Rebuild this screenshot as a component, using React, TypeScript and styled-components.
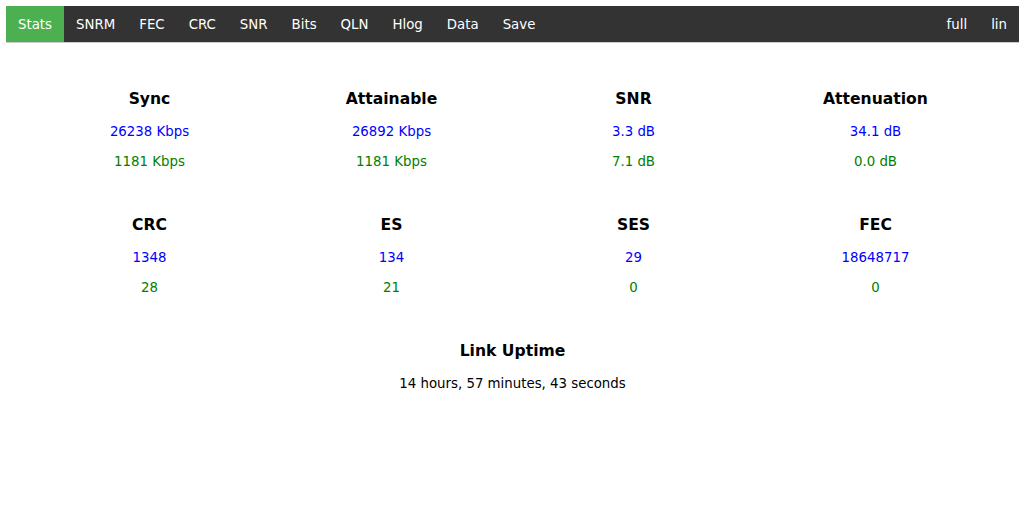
import React from "react";
import styled, { createGlobalStyle } from "styled-components";

const GlobalStyle = createGlobalStyle`
  body {
    margin: 6px;
    font-family: "DejaVu Sans", Verdana, sans-serif;
    font-size: 13.33px;
    color: #000;
    background: #fff;
  }
`;

const NavBar = styled.div`
  display: flex;
  height: 36px;
  background-color: #333;
  border-bottom: 1px solid #ccc;
`;

const NavSpacer = styled.div`
  flex: 1;
`;

const NavItem = styled.a<{ $active?: boolean }>`
  display: flex;
  align-items: center;
  padding: 0 12px;
  color: #fff;
  text-decoration: none;
  cursor: pointer;
  background-color: ${(p) => (p.$active ? "#4caf50" : "transparent")};
`;

const Content = styled.div`
  width: 968px;
  margin: 46px auto 0;
  display: flex;
  flex-direction: column;
  gap: 38px;
`;

const Row = styled.div`
  display: grid;
  grid-template-columns: repeat(4, 1fr);
`;

const Cell = styled.div`
  display: flex;
  flex-direction: column;
  align-items: center;
`;

const Title = styled.div`
  font-weight: bold;
  font-size: 15.6px;
  line-height: 20px;
  margin-bottom: 8px;
`;

const Value = styled.div<{ $tone?: "down" | "up" | "plain" }>`
  line-height: 30px;
  color: ${(p) =>
    p.$tone === "down" ? "#0000ff" : p.$tone === "up" ? "#008000" : "#000"};
`;

interface Stat {
  title: string;
  down: string;
  up: string;
}

const rows: Stat[][] = [
  [
    { title: "Sync", down: "26238 Kbps", up: "1181 Kbps" },
    { title: "Attainable", down: "26892 Kbps", up: "1181 Kbps" },
    { title: "SNR", down: "3.3 dB", up: "7.1 dB" },
    { title: "Attenuation", down: "34.1 dB", up: "0.0 dB" },
  ],
  [
    { title: "CRC", down: "1348", up: "28" },
    { title: "ES", down: "134", up: "21" },
    { title: "SES", down: "29", up: "0" },
    { title: "FEC", down: "18648717", up: "0" },
  ],
];

const tabs = ["Stats", "SNRM", "FEC", "CRC", "SNR", "Bits", "QLN", "Hlog", "Data", "Save"];

const App: React.FC = () => {
  return (
    <>
      <GlobalStyle />
      <NavBar>
        {tabs.map((t) => (
          <NavItem key={t} $active={t === "Stats"}>
            {t}
          </NavItem>
        ))}
        <NavSpacer />
        <NavItem>full</NavItem>
        <NavItem>lin</NavItem>
      </NavBar>
      <Content>
        {rows.map((row, i) => (
          <Row key={i}>
            {row.map((s) => (
              <Cell key={s.title}>
                <Title>{s.title}</Title>
                <Value $tone="down">{s.down}</Value>
                <Value $tone="up">{s.up}</Value>
              </Cell>
            ))}
          </Row>
        ))}
        <Cell>
          <Title>Link Uptime</Title>
          <Value>14 hours, 57 minutes, 43 seconds</Value>
        </Cell>
      </Content>
    </>
  );
};

export default App;
